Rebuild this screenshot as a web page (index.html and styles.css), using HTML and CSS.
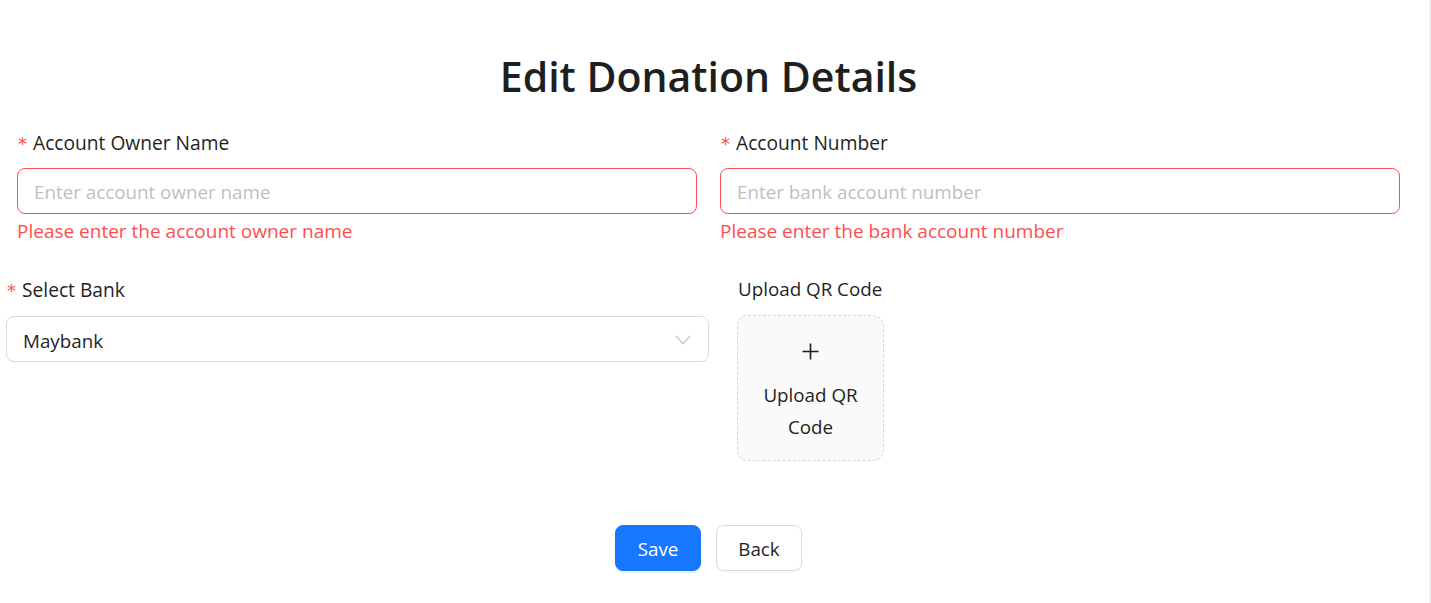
FILE: index.html
```html
<!DOCTYPE html>
<html lang="en">
<head>
<meta charset="utf-8">
<title>Edit Donation Details</title>
<link rel="stylesheet" href="styles.css">
</head>
<body>
<div class="page">
  <main class="form">
    <h1 class="title">Edit Donation Details</h1>

    <div class="row row-one">
      <div class="field">
        <label class="label"><span class="req">*</span>Account Owner Name</label>
        <div class="input input-error"><span class="placeholder">Enter account owner name</span></div>
        <div class="error">Please enter the account owner name</div>
      </div>
      <div class="field">
        <label class="label"><span class="req">*</span>Account Number</label>
        <div class="input input-error"><span class="placeholder">Enter bank account number</span></div>
        <div class="error">Please enter the bank account number</div>
      </div>
    </div>

    <div class="row row-two">
      <div class="field">
        <label class="label"><span class="req">*</span>Select Bank</label>
        <div class="input select">
          <span class="value">Maybank</span>
          <svg class="chevron" width="16" height="10" viewBox="0 0 16 10"><path d="M0.8 0.8 L8 8.6 L15.2 0.8" fill="none" stroke="#bfbfbf" stroke-width="1.1"/></svg>
        </div>
      </div>
      <div class="field">
        <label class="label label-plain">Upload QR Code</label>
        <div class="upload">
          <svg class="plus" width="17" height="17" viewBox="0 0 17 17"><path d="M8.5 0.5 V16.5 M0.5 8.5 H16.5" stroke="#1f1f1f" stroke-width="1.6" fill="none"/></svg>
          <div class="upload-text">Upload QR<br>Code</div>
        </div>
      </div>
    </div>

    <div class="actions">
      <button class="btn btn-primary" type="button">Save</button>
      <button class="btn btn-default" type="button">Back</button>
    </div>
  </main>
</div>
</body>
</html>
```

FILE: styles.css
```css
* { box-sizing: border-box; }

html, body {
  margin: 0;
  padding: 0;
  background: #ffffff;
}

body {
  font-family: "Open Sans", "Noto Sans", sans-serif;
  color: #1f1f1f;
  font-size: 18.8px;
}

.page {
  width: 1431px;
  height: 603px;
  display: flex;
}

.page::after {
  content: "";
  display: block;
  width: 2px;
  margin-left: 12px;
  background: #f0f0f0;
}

.form {
  width: 1417px;
}

.title {
  margin: 0;
  padding-top: 51px;
  font-size: 41px;
  font-weight: 600;
  line-height: 50px;
  text-align: center;
  color: #1f1f1f;
}

.row {
  display: grid;
}

.row-one {
  grid-template-columns: 680px 680px;
  column-gap: 23px;
  padding: 0 17px;
  margin-top: 25px;
}

.row-two {
  grid-template-columns: 703px 147px;
  column-gap: 28px;
  padding-left: 6px;
  margin-top: 27px;
}

.label {
  display: block;
  line-height: 31px;
  height: 32px;
  padding-top: 1px;
  margin-bottom: 10px;
  white-space: nowrap;
  font-size: 19.2px;
}

.row-two .label {
  padding-top: 0;
  margin-bottom: 10px;
}

.label-plain {
  padding-left: 1px;
  font-size: 18.8px;
}

.req {
  color: #ff4d4f;
  font-family: "DejaVu Sans", sans-serif;
  font-size: 18px;
  margin-right: 6px;
  margin-left: 1px;
}

.input {
  height: 46px;
  border: 1px solid #d9d9d9;
  border-radius: 8px;
  padding: 2px 16px 0;
  display: flex;
  align-items: center;
  background: #ffffff;
}

.input-error {
  border-color: #ff4d4f;
}

.placeholder {
  color: #bfbfbf;
}

.error {
  color: #ff4d4f;
  line-height: 31px;
  padding-top: 2px;
  padding-left: 0;
  font-size: 19px;
}

.select {
  justify-content: space-between;
  padding-top: 3px;
  padding-right: 17px;
}

.chevron {
  display: block;
  margin-top: -1px;
}

.upload {
  width: 147px;
  height: 146px;
  margin-top: -1px;
  border: 1px dashed #d9d9d9;
  border-radius: 11px;
  background: #fafafa;
  display: flex;
  flex-direction: column;
  align-items: center;
  padding-top: 27px;
}

.plus {
  display: block;
}

.upload-text {
  margin-top: 20px;
  line-height: 31.5px;
  text-align: center;
}

.actions {
  display: flex;
  justify-content: center;
  gap: 15px;
  margin-top: 64px;
}

.btn {
  width: 86px;
  height: 46px;
  border-radius: 8px;
  font-family: "Open Sans", "Noto Sans", sans-serif;
  font-size: 18.8px;
  padding: 2px 0 0;
  cursor: pointer;
}

.btn-primary {
  background: #1677ff;
  border: 1px solid #1677ff;
  color: #ffffff;
  box-shadow: 0 2px 0 rgba(5, 145, 255, 0.1);
}

.btn-default {
  background: #ffffff;
  border: 1px solid #d9d9d9;
  color: #1f1f1f;
  box-shadow: 0 2px 0 rgba(0, 0, 0, 0.02);
}
```
